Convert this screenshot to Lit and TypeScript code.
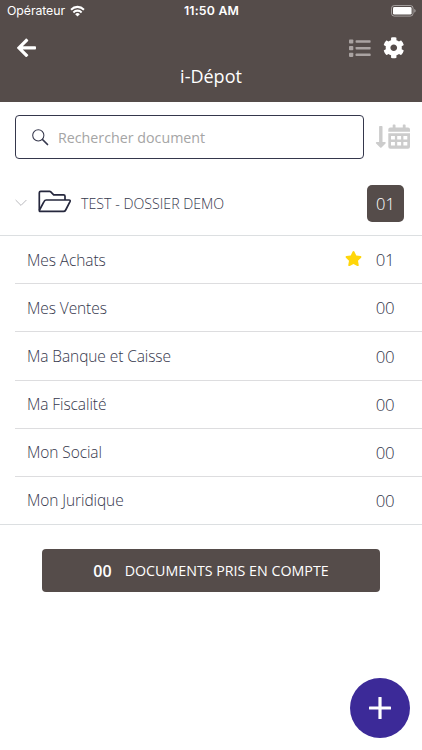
import { LitElement, html, css, svg, nothing } from "lit";
import { customElement } from "lit/decorators.js";

interface Category {
  cls: string;
  label: string;
  count: string;
  starred?: boolean;
}

const CATEGORIES: Category[] = [
  { cls: "achats", label: "Mes Achats", count: "01", starred: true },
  { cls: "ventes", label: "Mes Ventes", count: "00" },
  { cls: "banque", label: "Ma Banque et Caisse", count: "00" },
  { cls: "fiscalite", label: "Ma Fiscalité", count: "00" },
  { cls: "social", label: "Mon Social", count: "00" },
  { cls: "juridique", label: "Mon Juridique", count: "00" },
];

const wifi = svg`<svg width="15" height="12" viewBox="0 0 16 12" preserveAspectRatio="none" fill="none" stroke="#fff" stroke-width="2.100">
  <path d="M1.100 4.700a9.900 9.900 0 0 1 13.800 0" /><path d="M3.600 7.400a6.300 6.300 0 0 1 8.800 0" />
  <path d="M8 11.600 5.500 9.200a3.600 3.600 0 0 1 5 0z" fill="#fff" stroke="none" /></svg>`;

const battery = svg`<svg width="25" height="12" viewBox="0 0 25 12">
  <rect x=".5" y=".5" width="21.600" height="10.600" rx="2.800" fill="none" stroke="#fff" stroke-opacity=".45" />
  <rect x="2" y="2" width="18.600" height="7.600" rx="1.400" fill="#fff" />
  <path d="M23.300 4v3.700c.9-.3 1.300-1 1.300-1.850S24.200 4.300 23.300 4z" fill="#fff" fill-opacity=".5" /></svg>`;

const arrowLeft = svg`<svg width="19" height="21.700" viewBox="0 0 448 512" fill="#fff">
  <path d="M257.500 445.100l-22.200 22.200c-9.400 9.400-24.600 9.400-33.900 0L7 273c-9.400-9.400-9.400-24.600 0-33.900L201.400 44.700c9.400-9.400 24.600-9.400 33.900 0l22.200 22.200c9.500 9.500 9.300 25-.4 34.300L136.600 216H424c13.300 0 24 10.700 24 24v32c0 13.300-10.700 24-24 24H136.600l120.500 114.800c9.800 9.300 10 24.800.4 34.300z" /></svg>`;

const listIcon = svg`<svg width="22" height="19" viewBox="0 0 22 19" fill="#aaa3a2">
  <rect x="0" y=".4" width="4.300" height="4.100" rx=".8" /><rect x="0" y="7.100" width="4.300" height="4.100" rx=".8" /><rect x="0" y="13.800" width="4.300" height="4.100" rx=".8" />
  <rect x="6.600" y="1.200" width="15" height="2.500" rx=".7" /><rect x="6.600" y="7.900" width="15" height="2.500" rx=".7" /><rect x="6.600" y="14.600" width="15" height="2.500" rx=".7" /></svg>`;

const gear = svg`<svg width="21.500" height="21.500" viewBox="0 0 512 512" fill="#fff">
  <path d="M487.400 315.700l-42.600-24.600c4.300-23.200 4.300-47 0-70.200l42.600-24.600c4.900-2.800 7.100-8.600 5.500-14-11.100-35.600-30-67.800-54.700-94.600-3.800-4.100-10-5.100-14.800-2.300L380.800 110c-17.900-15.400-38.500-27.300-60.800-35.100V25.800c0-5.600-3.900-10.500-9.400-11.700-36.700-8.200-74.300-7.800-109.200 0-5.500 1.200-9.400 6.100-9.400 11.700V75c-22.200 7.900-42.800 19.800-60.800 35.100L88.700 85.500c-4.900-2.800-11-1.900-14.800 2.300-24.700 26.700-43.600 58.900-54.700 94.600-1.700 5.400.6 11.200 5.500 14L67.300 221c-4.300 23.200-4.300 47 0 70.200l-42.600 24.600c-4.900 2.800-7.100 8.600-5.500 14 11.100 35.600 30 67.800 54.700 94.600 3.800 4.100 10 5.100 14.800 2.300l42.600-24.600c17.900 15.400 38.500 27.300 60.800 35.100v49.200c0 5.600 3.900 10.500 9.400 11.700 36.700 8.200 74.300 7.800 109.200 0 5.500-1.200 9.400-6.100 9.400-11.700v-49.200c22.200-7.900 42.800-19.800 60.800-35.100l42.600 24.600c4.900 2.800 11 1.900 14.800-2.300 24.700-26.700 43.600-58.900 54.700-94.600 1.500-5.500-.7-11.300-5.600-14.100zM256 336c-44.100 0-80-35.900-80-80s35.900-80 80-80 80 35.900 80 80-35.900 80-80 80z" /></svg>`;

const magnifier = svg`<svg width="17" height="17" viewBox="0 0 17 17" fill="none" stroke="#35374c">
  <circle cx="6.300" cy="6.300" r="5.600" stroke-width="1.050" /><path d="M10.500 10.500l5 5" stroke-width="1.700" stroke-linecap="round" /></svg>`;

const sortByDate = svg`<svg width="36" height="26" viewBox="0 0 36 26">
  <path d="M4.100 2.700q0-.7.7-.7h2q.7 0 .7.700v15.300h2.400c.8 0 1.100.9.600 1.400l-4 4.100q-.7.600-1.400 0l-4-4.100c-.5-.5-.2-1.400.6-1.400h2.400z" fill="#ccc" />
  <path fill="#ccc" fill-rule="evenodd" d="M13.300 9.200h21.700v13.600a2 2 0 0 1-2 2H15.300a2 2 0 0 1-2-2zM16 12h3.900v3.600H16zm6.200 0h3.900v3.600h-3.900zm6.200 0h3.900v3.600h-3.900zM16 18h3.900v3.600H16zm6.200 0h3.900v3.600h-3.900zm6.200 0h3.900v3.600h-3.900z" />
  <path fill="#ccc" d="M13.300 7.700V5.500a2 2 0 0 1 2-2h2.400V1.200q0-.7.700-.7h1.400q.7 0 .7.700v2.300h7.300V1.200q0-.7.700-.7h1.400q.7 0 .7.700v2.300h2.400a2 2 0 0 1 2 2v2.200z" /></svg>`;

const chevron = svg`<svg width="12" height="8" viewBox="0 0 12 8" fill="none" stroke="#b9b9bd" stroke-width="1">
  <path d="M.6 1 6 6.400 11.400 1" /></svg>`;

const folder = svg`<svg width="34" height="24" viewBox="0 0 34 24" fill="none" stroke="#25273d" stroke-width="1.700" stroke-linejoin="round">
  <path d="M27 10V6.300Q27 4.800 25.600 4.800H15.700L12.800 1.900Q12.300 1.400 11.600 1.400H2.700Q1.300 1.400 1.300 2.800V20.200" />
  <path d="M2 21.400Q1 21.100 1.500 20L6 11.600Q6.800 10 8.300 10H31Q32.700 10 32 11.600L27.700 20Q27 21.400 25.500 21.400z" /></svg>`;

const star = svg`<svg width="17" height="15.200" viewBox="0 0 576 512" fill="#ffd60a">
  <path d="M259.300 17.800L194 150.200 47.900 171.500c-26.200 3.800-36.700 36.100-17.700 54.600l105.700 103-25 145.500c-4.500 26.300 23.200 46 46.400 33.700L288 439.600l130.700 68.700c23.200 12.200 50.900-7.400 46.400-33.700l-25-145.500 105.700-103c19-18.500 8.500-50.800-17.700-54.600L382 150.200 316.700 17.800c-11.700-23.600-45.600-23.900-57.400 0z" /></svg>`;

const plus = svg`<svg width="22" height="22" viewBox="0 0 22 22" fill="#fff">
  <rect x="0" y="9.400" width="22" height="3.200" rx=".6" /><rect x="9.400" y="0" width="3.200" height="22" rx=".6" /></svg>`;

@customElement("app-root")
export class AppRoot extends LitElement {
  static styles = css`
    :host {
      display: flex;
      flex-direction: column;
      position: relative;
      height: 750px;
      overflow: hidden;
      background: #fff;
      color: #35374c;
      font-family: "Open Sans", "Noto Sans", sans-serif;
      font-weight: 300;
    }
    * { box-sizing: border-box; }
    svg { display: block; flex: none; }
    span { white-space: nowrap; }
    .header { height: 102px; flex: none; background: #554c4a; color: #fff; }
    .status {
      display: grid;
      grid-template-columns: 1fr auto 1fr;
      align-items: center;
      height: 22px;
      padding: 0 6px 0 7px;
      font: 400 12.300px/22px Inter, sans-serif;
    }
    .carrier { display: flex; align-items: center; gap: 5px; }
    .operator { letter-spacing: -0.070px; }
    .time { font-weight: 600; letter-spacing: 0.200px; }
    .power { display: flex; justify-content: flex-end; }
    .nav { display: flex; align-items: center; height: 52px; padding: 0 17px; }
    .tools { display: flex; align-items: center; gap: 11.600px; margin: 0 1px 0 auto; }
    .title { height: 28px; margin-top: -12px; text-align: center; font-size: 18px; line-height: 28px; font-weight: 400; }
    .search { display: flex; align-items: center; gap: 10.500px; padding: 13px 10px 0 15px; }
    .field {
      display: flex;
      align-items: center;
      gap: 9px;
      width: 349px;
      height: 44px;
      padding-left: 16px;
      border: 1px solid #35374c;
      border-radius: 4px;
      color: #a5a5a5;
      font-size: 14.250px;
      font-weight: 400;
    }
    .folder {
      display: flex;
      align-items: center;
      height: 77px;
      padding: 12px 18px 0 15px;
      border-bottom: 1px solid #dcdfe1;
      font-size: 14.200px;
    }
    .folder-icon { margin: -2px 9px 0 11px; }
    .badge {
      width: 37px;
      height: 37px;
      margin: 1px 0 0 auto;
      border-radius: 5px;
      background: #554c4a;
      color: #fff;
      font-size: 16.500px;
      line-height: 38px;
      text-align: center;
    }
    .list { height: 289px; border-bottom: 1px solid #dcdfe1; }
    .row {
      display: flex;
      align-items: center;
      height: 48.200px;
      margin-left: 15px;
      padding: 0 28px 0 12px;
      border-bottom: 1px solid #dddddf;
      font-size: 15.500px;
      letter-spacing: -0.090px;
    }
    .row:last-child { height: 47px; border-bottom: 0; }
    .label { padding-bottom: 0.200px; }
    .marker { margin: -2px 14.500px 0 auto; }
    .count { display: flex; justify-content: center; width: 18px; padding-top: 0.400px; font-size: 16.800px; letter-spacing: -0.300px; }
    .row .label + .count { margin-left: auto; }
    .summary {
      display: flex;
      align-items: center;
      justify-content: center;
      gap: 13px;
      width: 338px;
      height: 43px;
      margin: 24px 0 0 42px;
      border-radius: 4px;
      background: #554c4a;
      color: #fff;
      font-size: 14.250px;
      font-weight: 400;
    }
    .total { font-weight: 600; font-size: 16px; }
    .fab {
      position: absolute;
      right: 12px;
      bottom: 12px;
      display: flex;
      align-items: center;
      justify-content: center;
      width: 60px;
      height: 60px;
      border-radius: 50%;
      background: #3c2a98;
    }
  `;

  render() {
    return html`
      <div class="header">
        <div class="status">
          <div class="carrier"><span class="operator">Opérateur</span>${wifi}</div>
          <span class="time">11:50 AM</span>
          <div class="power">${battery}</div>
        </div>
        <div class="nav">
          ${arrowLeft}
          <div class="tools">${listIcon}${gear}</div>
        </div>
        <div class="title"><span>i-Dépot</span></div>
      </div>
      <div class="search">
        <div class="field">${magnifier}<span class="placeholder">Rechercher document</span></div>
        ${sortByDate}
      </div>
      <div class="folder">
        ${chevron}
        <div class="folder-icon">${folder}</div>
        <span class="folder-name">TEST - DOSSIER DEMO</span>
        <div class="badge">01</div>
      </div>
      <div class="list">
        ${CATEGORIES.map(
          (c) => html`<div class="row ${c.cls}">
            <span class="label">${c.label}</span>
            ${c.starred ? html`<div class="marker">${star}</div>` : nothing}
            <span class="count">${c.count}</span>
          </div>`
        )}
      </div>
      <div class="summary"><span class="total">00</span><span class="caption">DOCUMENTS PRIS EN COMPTE</span></div>
      <div class="fab">${plus}</div>
    `;
  }
}
